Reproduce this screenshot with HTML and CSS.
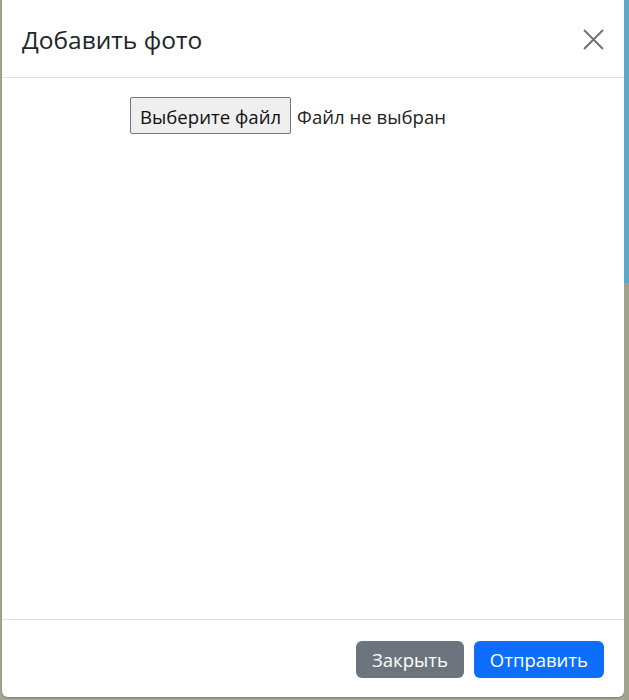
FILE: index.html
```html
<!DOCTYPE html>
<html lang="ru">
<head>
    <meta charset="UTF-8">
    <meta name="viewport" content="width=device-width, initial-scale=1.0">
    <title>Добавить фото</title>
    <link rel="stylesheet" href="styles.css">
</head>
<body>

<div class="page">
    <div class="modal">
        <div class="modal-header">
            <h5 class="modal-title">Добавить фото</h5>
            <button class="btn-close" type="button" aria-label="Закрыть">
                <svg width="21" height="21" viewBox="0 0 21 21">
                    <path d="M1 1 L20 20 M20 1 L1 20" stroke="#707070" stroke-width="1.9" fill="none"/>
                </svg>
            </button>
        </div>

        <div class="modal-body">
            <div class="file-row">
                <span class="file-button">Выберите файл</span>
                <span class="file-name">Файл не выбран</span>
            </div>
        </div>

        <div class="modal-footer">
            <button class="btn btn-secondary" type="button">Закрыть</button>
            <button class="btn btn-primary" type="button">Отправить</button>
        </div>
    </div>

    <div class="side">
        <div class="side-blue"></div>
    </div>
</div>

</body>
</html>
```

FILE: styles.css
```css
body {
    margin: 0;
    padding: 0;
    background-color: #a7aa96;
    font-family: "Open Sans", "Noto Sans", Arial, sans-serif;
    color: #212529;
}

.page {
    display: flex;
    padding-left: 2px;
    height: 700px;
}

.modal {
    width: 622px;
    height: 697px;
    background-color: #fff;
    border-radius: 0 0 6px 6px;
    display: flex;
    flex-direction: column;
    box-shadow: 0 1px 3px rgba(0,0,0,0.25);
}

.modal-header {
    height: 77px;
    padding: 0 20px;
    display: flex;
    align-items: center;
    justify-content: space-between;
    border-bottom: 1px solid #dee2e6;
}

.modal-title {
    margin: 0;
    padding-top: 3px;
    font-size: 24.5px;
    font-weight: 500;
    line-height: 1.5;
    color: #212529;
}

.btn-close {
    background: none;
    border: none;
    padding: 0;
    width: 21px;
    height: 21px;
    margin-top: 1px;
    display: flex;
    cursor: pointer;
}

.modal-body {
    flex: 1;
    padding: 19px 20px;
}

.file-row {
    display: flex;
    align-items: center;
    padding-left: 108px;
    font-size: 18.6px;
}

.file-button {
    height: 37px;
    padding: 1px 9px 0;
    box-sizing: border-box;
    display: flex;
    align-items: center;
    background-color: #efefef;
    border: 1px solid #767676;
    border-radius: 2px;
    color: #111;
}

.file-name {
    margin-left: 6px;
    padding-top: 1px;
    color: #222;
}

.modal-footer {
    height: 77px;
    padding: 0 20px;
    display: flex;
    align-items: center;
    justify-content: flex-end;
    gap: 10px;
    border-top: 1px solid #dee2e6;
}

.btn {
    height: 37px;
    padding: 0 16px;
    border: none;
    border-radius: 6px;
    color: #fff;
    font-family: inherit;
    font-size: 18.5px;
    margin-top: 2px;
    cursor: pointer;
}

.btn-secondary {
    background-color: #6c757d;
}

.btn-primary {
    background-color: #0d6efd;
}

.side {
    width: 5px;
    background-color: #9fa38e;
}

.side-blue {
    height: 283px;
    background-color: #5aa8c6;
}
```
